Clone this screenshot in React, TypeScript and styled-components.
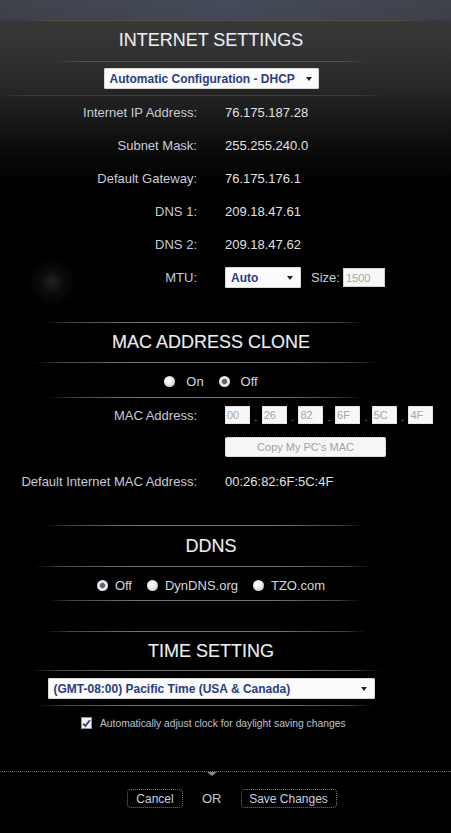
import React from "react";
import styled, { createGlobalStyle } from "styled-components";

const GlobalStyle = createGlobalStyle`
  html, body { margin: 0; padding: 0; background: #000; }
  body { font-family: "Liberation Sans", Arial, sans-serif; }
  * { box-sizing: border-box; }
`;

const Page = styled.div`
  width: 451px;
  min-height: 833px;
  overflow: hidden;
  background:
    radial-gradient(circle at 52px 282px, rgba(95, 95, 95, 0.35) 0, rgba(60, 60, 60, 0.18) 12px, rgba(0, 0, 0, 0) 24px),
    linear-gradient(180deg, #3e4046 0, #3b3c41 19px, #373737 22px, #333 50px, #282828 85px, #171717 122px, #090909 155px, #000 185px);
`;

const TopBand = styled.div`
  height: 20px;
  background: linear-gradient(90deg, rgba(70, 85, 110, 0.15), rgba(80, 95, 125, 0.35) 50%, rgba(70, 85, 110, 0.15));
`;

const Column = styled.div`
  width: 422px;
`;

const Sep = styled.div<{ $from: number; $to: number; $mt: number; $tone?: string }>`
  height: 1px;
  margin-top: ${(p) => p.$mt}px;
  margin-left: ${(p) => p.$from}px;
  width: ${(p) => p.$to - p.$from}px;
  background: linear-gradient(
    90deg,
    rgba(0, 0, 0, 0) 0%,
    ${(p) => p.$tone ?? "rgba(120,120,120,0.55)"} 8%,
    ${(p) => p.$tone ?? "rgba(128,128,128,0.9)"} 28%,
    ${(p) => p.$tone ?? "rgba(128,128,128,0.9)"} 72%,
    ${(p) => p.$tone ?? "rgba(120,120,120,0.55)"} 92%,
    rgba(0, 0, 0, 0) 100%
  );
`;

const Title = styled.div<{ $mt: number }>`
  margin-top: ${(p) => p.$mt}px;
  height: 20px;
  line-height: 20px;
  font-size: 18px;
  text-align: center;
  color: #ececec;
  text-shadow: 0 0 1px rgba(120, 140, 190, 0.5);
`;

const SelectBox = styled.div<{ $w: number; $mt?: number; $center?: boolean }>`
  position: relative;
  width: ${(p) => p.$w}px;
  height: 21px;
  margin-top: ${(p) => p.$mt ?? 0}px;
  margin-left: ${(p) => (p.$center ? "auto" : "0")};
  margin-right: ${(p) => (p.$center ? "auto" : "0")};
  background: #fbfbfb;
  border: 1px solid #d8d8d8;
  border-radius: 1px;
  display: flex;
  align-items: center;
  padding-left: 5px;
  font-size: 12px;
  font-weight: bold;
  color: #2a3d7c;
  white-space: nowrap;
`;

const Caret = styled.span<{ $right: number }>`
  position: absolute;
  right: ${(p) => p.$right}px;
  top: 8px;
  width: 0;
  height: 0;
  border-left: 3px solid transparent;
  border-right: 3px solid transparent;
  border-top: 4px solid #222;
`;

const Row = styled.div<{ $h: number; $mt?: number }>`
  display: grid;
  grid-template-columns: 197px 1fr;
  column-gap: 28px;
  align-items: center;
  height: ${(p) => p.$h}px;
  margin-top: ${(p) => p.$mt ?? 0}px;
  font-size: 13px;
`;

const Label = styled.span`
  text-align: right;
  color: #c8ccd8;
  white-space: nowrap;
`;

const Value = styled.span`
  color: #e0e0e0;
  display: flex;
  align-items: center;
`;

const InlineLabel = styled.span`
  color: #c8ccd8;
  margin-left: 10px;
  margin-right: 3px;
`;

const TextBox = styled.input<{ $w: number }>`
  width: ${(p) => p.$w}px;
  height: 19px;
  padding: 0 2px;
  border: 1px solid #cfcfcf;
  background: #f7f7f7;
  color: #a6a6a6;
  font-family: "Liberation Sans", Arial, sans-serif;
  font-size: 11px;
  outline: none;
`;

const MacBox = styled(TextBox)`
  height: 18px;
  padding: 0 1px;
  border-style: dotted;
`;

const MacDot = styled.span`
  width: 11.7px;
  text-align: center;
  color: #9a9a9a;
  font-size: 11px;
  align-self: flex-end;
  line-height: 14px;
`;

const CopyButton = styled.div`
  width: 161px;
  height: 20px;
  background: #f6f6f6;
  border: 1px dotted #c0c0c0;
  border-radius: 2px;
  display: flex;
  align-items: center;
  justify-content: center;
  color: #a2a2a2;
  font-size: 11px;
`;

const RadioGroup = styled.div<{ $mt: number }>`
  margin-top: ${(p) => p.$mt}px;
  height: 20px;
  display: flex;
  justify-content: center;
  align-items: center;
  gap: 15px;
  font-size: 13px;
  color: #d4d6de;
`;

const RadioItem = styled.label<{ $inner: number }>`
  display: flex;
  align-items: center;
  gap: ${(p) => p.$inner}px;
`;

const RadioDot = styled.span<{ $on?: boolean }>`
  width: 11px;
  height: 11px;
  border-radius: 50%;
  background: ${(p) =>
    p.$on
      ? "radial-gradient(circle, #5f6678 0 2.2px, #c9ccd4 2.8px, #f2f2f2 4px, #dcdcdc 5.5px)"
      : "radial-gradient(circle at 40% 40%, #ffffff 0, #f4f4f4 3px, #d9d9d9 5.5px)"};
`;

const CheckRow = styled.div<{ $mt: number }>`
  margin-top: ${(p) => p.$mt}px;
  height: 14px;
  display: flex;
  align-items: center;
  padding-left: 81px;
  gap: 8px;
  font-size: 10.3px;
  color: #bcc0ce;
`;

const CheckBox = styled.span`
  width: 11px;
  height: 12px;
  background: #f3f3f3;
  border: 1px solid #8c93a8;
  display: flex;
  align-items: center;
  justify-content: center;
`;

const Footer = styled.div<{ $mt: number }>`
  position: relative;
  margin-top: ${(p) => p.$mt}px;
  border-top: 1px dotted #6a6a6a;
`;

const Pointer = styled.span`
  position: absolute;
  left: 207px;
  top: 0;
  width: 0;
  height: 0;
  border-left: 5px solid transparent;
  border-right: 5px solid transparent;
  border-top: 4px solid #8a8a8a;
`;

const ButtonRow = styled.div`
  margin-top: 17px;
  height: 19px;
  display: flex;
  align-items: center;
  padding-left: 127px;
  gap: 19px;
  font-size: 12px;
`;

const GhostButton = styled.div<{ $w: number }>`
  width: ${(p) => p.$w}px;
  height: 19px;
  border: 1px dotted #7a7a7a;
  border-radius: 4px;
  display: flex;
  align-items: center;
  justify-content: center;
  color: #c8cfe0;
`;

const Or = styled.span`
  color: #c8ccd8;
  font-size: 13px;
`;

const macParts = ["00", "26", "82", "6F", "5C", "4F"];

const infoRows: [string, string][] = [
  ["Internet IP Address:", "76.175.187.28"],
  ["Subnet Mask:", "255.255.240.0"],
  ["Default Gateway:", "76.175.176.1"],
  ["DNS 1:", "209.18.47.61"],
  ["DNS 2:", "209.18.47.62"],
];

export default function App() {
  return (
    <>
      <GlobalStyle />
      <Page>
        <TopBand />
        <Sep $from={20} $to={430} $mt={0} $tone="rgba(120,100,80,0.55)" />
        <Column>
          <Title $mt={9}>INTERNET SETTINGS</Title>
          <Sep $from={55} $to={368} $mt={11} $tone="rgba(95,95,95,0.7)" />
          <SelectBox $w={215} $mt={6} $center>
            Automatic Configuration - DHCP
            <Caret $right={6} />
          </SelectBox>
          <Sep $from={0} $to={385} $mt={6} $tone="rgba(90,80,70,0.6)" />
          {infoRows.map(([l, v]) => (
            <Row key={l} $h={33}>
              <Label>{l}</Label>
              <Value>{v}</Value>
            </Row>
          ))}
          <Row $h={33}>
            <Label>MTU:</Label>
            <Value>
              <SelectBox $w={76}>
                Auto
                <Caret $right={7} />
              </SelectBox>
              <InlineLabel>Size:</InlineLabel>
              <TextBox $w={42} readOnly value="1500" />
            </Value>
          </Row>

          <Sep $from={45} $to={365} $mt={28} />
          <Title $mt={9}>MAC ADDRESS CLONE</Title>
          <Sep $from={33} $to={378} $mt={10} />
          <RadioGroup $mt={8}>
            <RadioItem $inner={11}>
              <RadioDot />
              On
            </RadioItem>
            <RadioItem $inner={11}>
              <RadioDot $on />
              Off
            </RadioItem>
          </RadioGroup>
          <Sep $from={48} $to={362} $mt={6} />
          <Row $h={18} $mt={8}>
            <Label>MAC Address:</Label>
            <Value>
              {macParts.map((m, i) => (
                <React.Fragment key={m}>
                  {i > 0 && <MacDot>.</MacDot>}
                  <MacBox $w={25} readOnly value={m} />
                </React.Fragment>
              ))}
            </Value>
          </Row>
          <Row $h={20} $mt={13}>
            <span />
            <CopyButton>Copy My PC's MAC</CopyButton>
          </Row>
          <Row $h={20} $mt={14}>
            <Label>Default Internet MAC Address:</Label>
            <Value>00:26:82:6F:5C:4F</Value>
          </Row>

          <Sep $from={45} $to={365} $mt={34} />
          <Title $mt={10}>DDNS</Title>
          <Sep $from={33} $to={373} $mt={10} />
          <RadioGroup $mt={8}>
            <RadioItem $inner={7}>
              <RadioDot $on />
              Off
            </RadioItem>
            <RadioItem $inner={7}>
              <RadioDot />
              DynDNS.org
            </RadioItem>
            <RadioItem $inner={7}>
              <RadioDot />
              TZO.com
            </RadioItem>
          </RadioGroup>
          <Sep $from={48} $to={362} $mt={5} />

          <Sep $from={45} $to={367} $mt={30} />
          <Title $mt={9}>TIME SETTING</Title>
          <Sep $from={30} $to={382} $mt={9} />
          <SelectBox $w={327} $mt={7} $center>
            (GMT-08:00) Pacific Time (USA &amp; Canada)
            <Caret $right={7} />
          </SelectBox>
          <Sep $from={37} $to={375} $mt={6} />
          <CheckRow $mt={10}>
            <CheckBox>
              <svg width="9" height="9" viewBox="0 0 9 9">
                <path d="M1.2 4.6 L3.4 7 L7.8 1.2" fill="none" stroke="#2b3f86" strokeWidth="1.8" />
              </svg>
            </CheckBox>
            Automatically adjust clock for daylight saving changes
          </CheckRow>
        </Column>
        <Footer $mt={41}>
          <Pointer />
          <ButtonRow>
            <GhostButton $w={56}>Cancel</GhostButton>
            <Or>OR</Or>
            <GhostButton $w={96}>Save Changes</GhostButton>
          </ButtonRow>
        </Footer>
      </Page>
    </>
  );
}
